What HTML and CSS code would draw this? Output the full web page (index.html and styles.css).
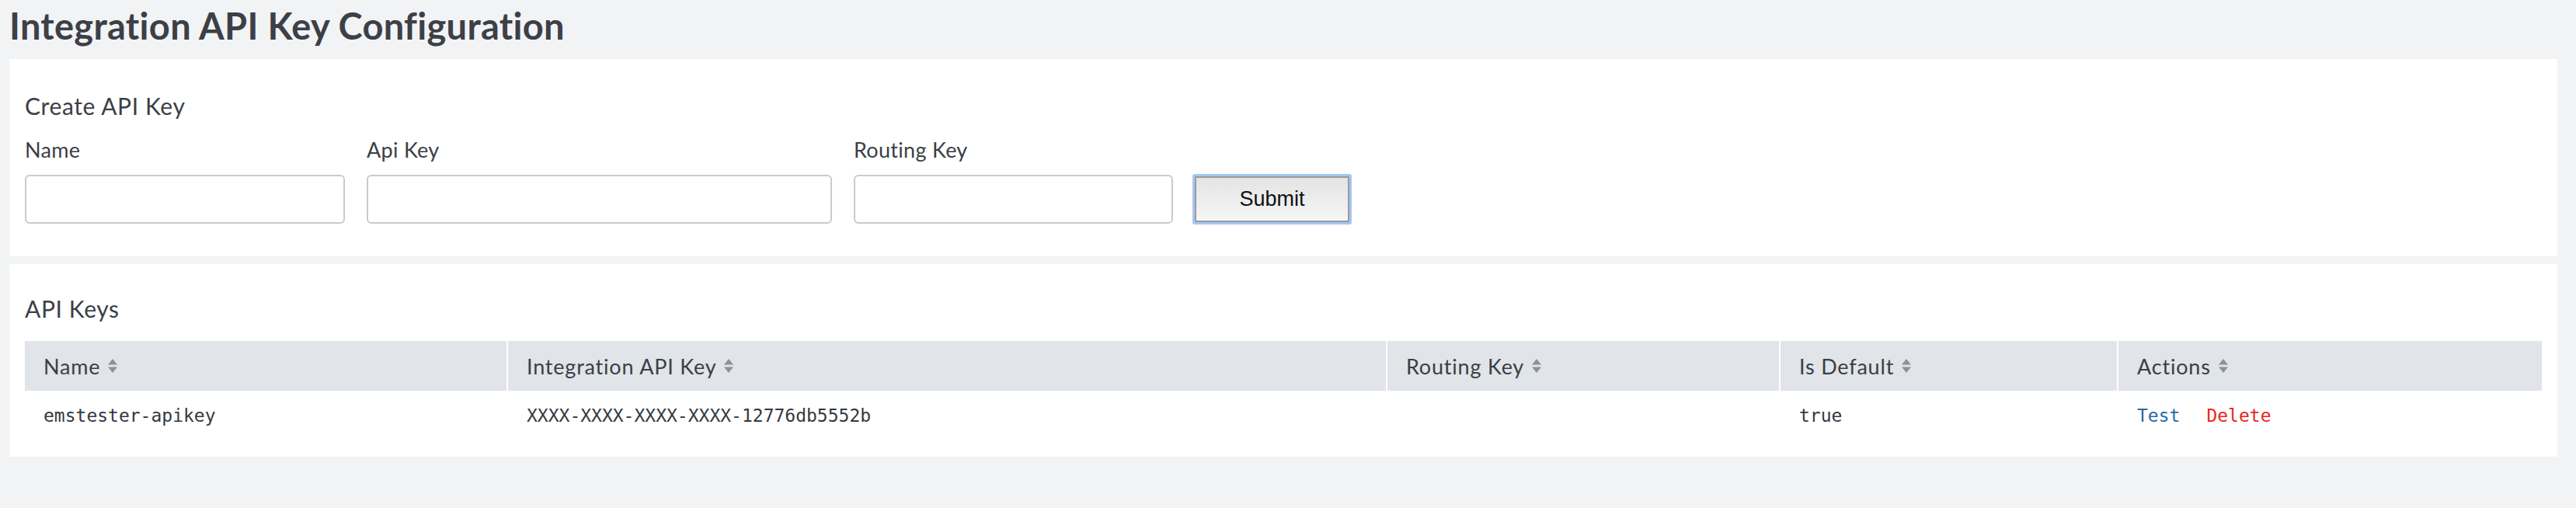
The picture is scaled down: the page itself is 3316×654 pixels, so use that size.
FILE: index.html
```html
<!DOCTYPE html>
<html>
<head>
<meta charset="utf-8">
<title>Integration API Key Configuration</title>
<link rel="stylesheet" href="styles.css">
</head>
<body>
<div class="page">
  <h1 class="page-title">Integration API Key Configuration</h1>

  <section class="card card-create">
    <h2 class="card-title">Create API Key</h2>
    <form class="form-row">
      <div class="field field-name">
        <label class="field-label">Name</label>
        <input class="field-input" type="text">
      </div>
      <div class="field field-key">
        <label class="field-label">Api Key</label>
        <input class="field-input" type="text">
      </div>
      <div class="field field-routing">
        <label class="field-label">Routing Key</label>
        <input class="field-input" type="text">
      </div>
      <button class="submit-btn" type="button">Submit</button>
    </form>
  </section>

  <section class="card card-list">
    <h2 class="card-title card-title-list">API Keys</h2>
    <table class="keys-table">
      <colgroup>
        <col class="col-name">
        <col class="col-key">
        <col class="col-routing">
        <col class="col-default">
        <col class="col-actions">
      </colgroup>
      <thead>
        <tr>
          <th><span class="th-inner">Name<svg class="sort" viewBox="0 0 14 20"><path d="M7 1 L13 8.5 L1 8.5 Z"/><path d="M1 11.5 L13 11.5 L7 19 Z"/></svg></span></th>
          <th><span class="th-inner">Integration API Key<svg class="sort" viewBox="0 0 14 20"><path d="M7 1 L13 8.5 L1 8.5 Z"/><path d="M1 11.5 L13 11.5 L7 19 Z"/></svg></span></th>
          <th><span class="th-inner">Routing Key<svg class="sort" viewBox="0 0 14 20"><path d="M7 1 L13 8.5 L1 8.5 Z"/><path d="M1 11.5 L13 11.5 L7 19 Z"/></svg></span></th>
          <th><span class="th-inner">Is Default<svg class="sort" viewBox="0 0 14 20"><path d="M7 1 L13 8.5 L1 8.5 Z"/><path d="M1 11.5 L13 11.5 L7 19 Z"/></svg></span></th>
          <th><span class="th-inner">Actions<svg class="sort" viewBox="0 0 14 20"><path d="M7 1 L13 8.5 L1 8.5 Z"/><path d="M1 11.5 L13 11.5 L7 19 Z"/></svg></span></th>
        </tr>
      </thead>
      <tbody>
        <tr>
          <td>emstester-apikey</td>
          <td>XXXX-XXXX-XXXX-XXXX-12776db5552b</td>
          <td></td>
          <td>true</td>
          <td><a class="action action-test">Test</a><a class="action action-delete">Delete</a></td>
        </tr>
      </tbody>
    </table>
  </section>
</div>
</body>
</html>
```
FILE: styles.css
```css
html, body {
  margin: 0;
  padding: 0;
  background: #f2f3f5;
}

body {
  font-family: Lato, "Open Sans", sans-serif;
  color: #3b4047;
  width: 3316px;
  height: 654px;
  overflow: hidden;
}

.page {
  padding: 0 24px 0 12px;
}

.page-title {
  margin: 0;
  height: 76px;
  box-sizing: border-box;
  padding-top: 5px;
  font-size: 47px;
  line-height: 56px;
  font-weight: 700;
  color: #3c4046;
  letter-spacing: 0.3px;
}

.card {
  background: #ffffff;
  padding: 20px;
  box-sizing: border-box;
}

.card-create {
  height: 254px;
}

.card-list {
  height: 248px;
  margin-top: 10px;
}

.card-title {
  margin: 0;
  padding-top: 24px;
  font-size: 30px;
  line-height: 32px;
  font-weight: 400;
  letter-spacing: 0.6px;
  color: #3b4047;
}

.card-title-list {
  padding-top: 21px;
}

.form-row {
  display: flex;
  align-items: flex-end;
  gap: 28px;
  margin-top: 25px;
}

.field {
  display: flex;
  flex-direction: column;
}

.field-name { width: 412px; }
.field-key { width: 599px; }
.field-routing { width: 411px; }

.field-label {
  font-size: 27px;
  line-height: 32px;
  letter-spacing: 0.3px;
  color: #3b4047;
  margin-bottom: 16px;
}

.field-input {
  height: 63px;
  box-sizing: border-box;
  border: 2px solid #c7cbd1;
  border-radius: 6px;
  background: #fff;
  margin: 0;
  padding: 0 12px;
}

.submit-btn {
  width: 199px;
  height: 59px;
  margin: 0 0 2px 0;
  box-sizing: border-box;
  border: 2px solid #9b9b9b;
  border-radius: 1px;
  box-shadow: 0 0 0 3px #a3c7f3;
  background: linear-gradient(#e4e4e4, #f6f6f6);
  font-family: "Liberation Sans", Arial, sans-serif;
  font-size: 27px;
  color: #111;
  padding: 0;
}

.keys-table {
  margin-top: 26px;
  width: 3240px;
  border-collapse: collapse;
  table-layout: fixed;
}

.col-name { width: 621px; }
.col-key { width: 1132px; }
.col-routing { width: 506px; }
.col-default { width: 435px; }
.col-actions { width: 546px; }

.keys-table th {
  height: 64px;
  padding: 0 0 0 24px;
  background: #e1e4e8;
  border-left: 2px solid #ffffff;
  text-align: left;
  font-weight: 400;
  font-size: 27px;
  letter-spacing: 0.8px;
  color: #3a3f46;
  vertical-align: middle;
}

.keys-table th:first-child {
  border-left: none;
}

.th-inner {
  display: inline-flex;
  align-items: center;
}

.sort {
  width: 14px;
  height: 20px;
  margin-left: 9px;
  fill: #8b929b;
}

.keys-table td {
  height: 64px;
  padding: 0 0 0 24px;
  border-left: 2px solid transparent;
  font-family: "DejaVu Sans Mono", "Liberation Mono", monospace;
  font-size: 23px;
  color: #34393f;
  vertical-align: middle;
}

.keys-table td:first-child {
  border-left: none;
}

.action {
  cursor: pointer;
}

.action-test {
  color: #2a6aa8;
  margin-right: 34px;
}

.action-delete {
  color: #e8281b;
}
```
